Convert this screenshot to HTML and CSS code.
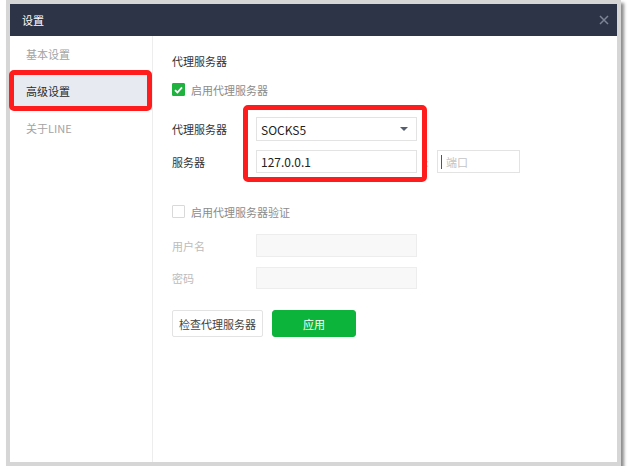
FILE: index.html
```html
<!DOCTYPE html>
<html lang="zh-CN">
<head>
<meta charset="utf-8">
<link rel="stylesheet" href="styles.css">
</head>
<body>
<div class="frame">
  <div class="dialog">
    <div class="titlebar">
      <span class="title">设置</span>
      <svg class="close" width="10" height="10" viewBox="0 0 10 10"><path d="M1 1L9 9M9 1L1 9" stroke="#7d8495" stroke-width="1.5"/></svg>
    </div>
    <div class="body">
      <div class="sidebar">
        <div class="nav-item">基本设置</div>
        <div class="nav-item active">高级设置</div>
        <div class="nav-item">关于LINE</div>
        <div class="mark mark-side"></div>
      </div>
      <div class="main">
        <div class="heading">代理服务器</div>
        <div class="check-row">
          <span class="cb checked"><svg width="9" height="8" viewBox="0 0 9 8"><path d="M1 4.2L3.4 6.5L8 1.3" fill="none" stroke="#fff" stroke-width="1.8"/></svg></span>
          <span class="cb-label">启用代理服务器</span>
        </div>
        <div class="form-row row-type">
          <span class="label">代理服务器</span>
          <div class="field select">SOCKS5<span class="caret"></span></div>
        </div>
        <div class="form-row row-server">
          <span class="label">服务器</span>
          <div class="field">127.0.0.1</div>
          <span class="colon">:</span>
          <div class="field port"><span class="cursor"></span>端口</div>
        </div>
        <div class="mark mark-main"></div>
        <div class="check-row row-auth">
          <span class="cb"></span>
          <span class="cb-label">启用代理服务器验证</span>
        </div>
        <div class="form-row row-user">
          <span class="label disabled">用户名</span>
          <div class="field off"></div>
        </div>
        <div class="form-row row-pass">
          <span class="label disabled">密码</span>
          <div class="field off"></div>
        </div>
        <div class="buttons">
          <button class="btn btn-plain">检查代理服务器</button>
          <button class="btn btn-green">应用</button>
        </div>
      </div>
    </div>
  </div>
</div>
</body>
</html>
```

FILE: styles.css
```css
html, body {
  margin: 0;
  padding: 0;
  background: #ffffff;
}
body {
  padding-left: 6px;
  font-family: "Noto Sans CJK SC", "Noto Sans", sans-serif;
  font-size: 11px;
}
.frame {
  width: 607px;
  height: 458px;
  padding: 4px;
  background: #d6d6d6;
  box-shadow: 3px 3px 3px rgba(0, 0, 0, 0.45);
}
.dialog {
  width: 607px;
  height: 458px;
  background: #ffffff;
  display: flex;
  flex-direction: column;
}
.titlebar {
  height: 32px;
  flex: none;
  background: #2d3447;
  display: flex;
  align-items: center;
  justify-content: space-between;
  padding: 0 8px 0 12px;
}
.title {
  color: #ffffff;
  font-size: 11px;
  line-height: 16px;
}
.close {
  display: block;
}
.body {
  flex: 1;
  display: flex;
}
.sidebar {
  position: relative;
  width: 142px;
  border-right: 1px solid #ededed;
  flex: none;
}
.nav-item {
  height: 37px;
  line-height: 37px;
  padding-left: 16px;
  color: #a3a3a3;
  font-size: 11px;
}
.nav-item.active {
  background: #e8eaf1;
  color: #2b2b2b;
}
.mark {
  position: absolute;
  border: 5px solid #ff1c1c;
  border-radius: 5px;
}
.mark-side {
  left: -1px;
  top: 34px;
  width: 133px;
  height: 31px;
}
.main {
  position: relative;
  flex: 1;
  padding: 17px 0 0 19px;
}
.heading {
  color: #333333;
  line-height: 16px;
  height: 16px;
}
.check-row {
  display: flex;
  align-items: center;
  margin-top: 14px;
  height: 13px;
}
.cb {
  width: 11px;
  height: 11px;
  border: 1px solid #d9d9d9;
  border-radius: 1px;
  background: #fff;
  display: flex;
  align-items: center;
  justify-content: center;
}
.cb.checked {
  background: #20b23f;
  border-color: #20b23f;
}
.cb svg {
  display: block;
}
.cb-label {
  margin-left: 6px;
  color: #8c8c8c;
  line-height: 16px;
}
.form-row {
  display: flex;
  align-items: center;
  height: 23px;
}
.row-type {
  margin-top: 21px;
  height: 24px;
}
.row-server {
  margin-top: 9px;
}
.label {
  width: 84px;
  color: #333333;
  line-height: 16px;
}
.label.disabled {
  color: #bcbcbc;
}
.field {
  box-sizing: border-box;
  width: 161px;
  height: 100%;
  border: 1px solid #e3e3e3;
  padding-left: 4px;
  display: flex;
  align-items: center;
  color: #222;
  font-size: 12px;
}
.select {
  justify-content: space-between;
  padding-right: 8px;
}
.caret {
  width: 0;
  height: 0;
  border-left: 4px solid transparent;
  border-right: 4px solid transparent;
  border-top: 4px solid #555e6e;
}
.colon {
  width: 20px;
  text-align: center;
  color: #d0d0d0;
  font-size: 11px;
}
.port {
  width: 83px;
  color: #c4c4c4;
  font-size: 11px;
  padding-left: 3px;
}
.cursor {
  width: 1px;
  height: 14px;
  background: #555;
  margin-right: 4px;
}
.mark-main {
  left: 90px;
  top: 69px;
  width: 174px;
  height: 67px;
}
.row-auth {
  margin-top: 32px;
}
.row-user {
  margin-top: 16px;
}
.row-pass {
  margin-top: 10px;
  height: 22px;
}
.field.off {
  background: #f8f8f8;
  border-color: #ededed;
}
.buttons {
  display: flex;
  gap: 9px;
  margin-top: 21px;
}
.btn {
  height: 27px;
  font-family: inherit;
  font-size: 11px;
  border-radius: 3px;
  padding: 0;
  cursor: pointer;
}
.btn-plain {
  width: 91px;
  background: #fff;
  border: 1px solid #e3e3e3;
  border-radius: 2px;
  color: #444;
}
.btn-green {
  width: 84px;
  background: #0db43c;
  border: 1px solid #0db43c;
  color: #fff;
}
```
